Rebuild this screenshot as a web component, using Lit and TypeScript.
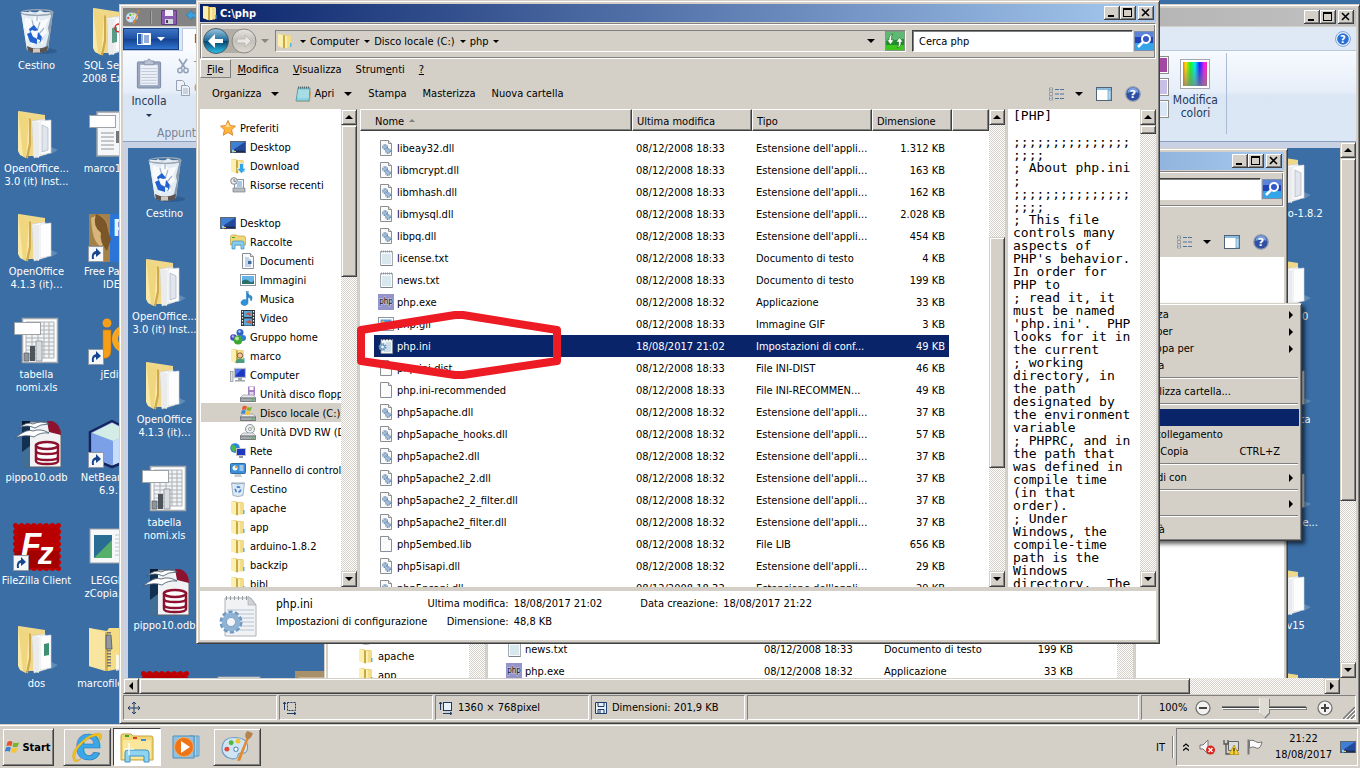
import { LitElement, html, css, svg, nothing } from 'lit'
import { customElement, property } from 'lit/decorators.js'
import { classMap } from 'lit/directives/class-map.js'
import { styleMap } from 'lit/directives/style-map.js'

/* ---------- icon fragments ---------- */

const page16 = svg`
  <path d="M2.500.5h8l3 3v12h-11z" fill="#fbfbfb" stroke="#8a8f94" />
  <path d="M10.500.5v3h3" fill="#e3e6e9" stroke="#8a8f94" />
`

const folder16 = svg`
  <path d="M1 1h5l1 1h6v12.500H5L1 13z" fill="#ecd079" />
  <path d="M1 1l5 1v13l-5-2z" fill="#fbf0b0" />
  <path d="M6 2l2 1v12.500l-2-.5z" fill="#cda743" />
  <path d="M8 3h2.500v12H8z" fill="#fbefb0" />
  <path d="M10.500 2.500H14V14h-3.500z" fill="#f3dc86" />
  <rect x="13" y="10" width="1.500" height="4" fill="#53b6e8" />
`

const monitor16 = svg`
  <rect x=".5" y="2.500" width="15" height="11" fill="#23499b" stroke="#5f666e" />
  <path d="M1 3h14L1 12z" fill="#3f7fd6" />
  <path d="M1 11.500h14v2H1z" fill="#1a2c52" />
  <circle cx="3" cy="12" r="1.500" fill="#8fd0f5" />
  <path d="M4 12h2v1h-2z" fill="#f3c945" />
`

const drive16 = svg`
  <path d="M3 9h10l3 3H0z" fill="#e6e8ea" stroke="#858b90" stroke-width=".6" />
  <path d="M.4 12h15.200v3.500H.4z" fill="#a4a9ad" stroke="#60666b" stroke-width=".8" />
  <rect x="11.500" y="13" width="2.500" height="1.500" fill="#35d03a" />
`

const bin = svg`
  <ellipse cx="30" cy="43" rx="14" ry="3" fill="#1f3f66" opacity=".35" />
  <path d="M8 4h32l-5 38q-11 6-21 0z" fill="#c3d0dc" />
  <path d="M8 4l6 38q4 2 8 3L14 4z" fill="#e9f0f6" />
  <path d="M35 4l-3 38 3-1 5-37z" fill="#8a9bac" />
  <path d="M11 7l6-4 5 3 5-4 5 3 5-1 1 4-3 12 1 5-3 13-8 3H17l-3-9 1-8-3-7z" fill="#e3ecf4" />
  <path d="M12 9l7 3 4-5 5 6 8-3-4 9 2 6-5 4 1 7-6-3-5 5-3-7-4-1 2-6-3-5z" fill="#fff" opacity=".75" />
  <path d="M19 12l2 8M27 14l-3 9M31 20l-5 6M18 28l6 3M30 30l-4 5M24 8v5" stroke="#a3b5c7" stroke-width="1.200" fill="none" />
  <path d="M14 38q10 5 21 0l-.7 5q-10 4-19.500 0z" fill="#5d534e" />
  <path d="M20 40.500h7v4h-7z" fill="#cfc9c4" />
  <path d="M16 21l5-4 4 5-3 1-3-1-2 2zM14 26l4-2 2 5 4 2v5l-7-2zM25 24l4 5-2 6v-3l-3-1z" fill="#1f62d0" />
  <ellipse cx="24" cy="4.500" rx="16" ry="2.800" fill="none" stroke="#9aa6b2" stroke-width="1.300" />
`

const folderOpen = (extra: unknown = nothing) => svg`
  <path d="M6 0l26 4v8l-8 33H12z" fill="#efd88a" />
  <path d="M19 10l13-2 2 35-13 4z" fill="#fff" stroke="#c9ccd0" stroke-width=".6" />
  <path d="M27 10l11-1v33l-11 2z" fill="#fdfdfe" stroke="#d4d7da" stroke-width=".6" />
  <path d="M20 10l6 1v36l-6-2z" fill="#e9ebed" />
  ${extra}
  <path d="M5 0l11 7v25l-3 15-6-3-2-4z" fill="#f8e9a8" />
  <path d="M5 0l11 7-3 40-3-2z" fill="#f0d67f" />
  <path d="M16 7v25l-3 15 2 .500 3-14V8z" fill="#cfa94a" />
  <path d="M38 36l7 3-7 4z" fill="#fff" opacity=".2" />
`

const shortcut = svg`
  <rect x=".5" y="32.500" width="15" height="15" fill="#f4f6f8" stroke="#8f9aa6" />
  <path d="M4 45q-1-7 4-8V34l5 5-5 4V40q-3 0-2 5z" fill="#16458f" />
`

const palette = svg`
  <path d="M2 15q1-9 11-9 13 0 13 9 0 6-5 6-3-1-4 1 0 5-6 4-10-2-9-11z" fill="#cfe5f4" stroke="#6f9cc0" />
  <circle cx="6.500" cy="17" r="2.300" fill="#e2483c" /><circle cx="10.500" cy="11" r="2.300" fill="#52b63c" />
  <circle cx="17" cy="9.500" r="2.300" fill="#f3c330" /><circle cx="15" cy="17" r="2" fill="#fff" stroke="#5d8fb8" />
  <path d="M16 28l9-22 2 1-8 21z" fill="#e58a2b" />
  <path d="M24 6q-1-4 2-6l5 2q-1 4-4 6z" fill="#b5834f" />
`

const icons: Record<string, [string, unknown]> = {
  star: ['0 0 16 16', svg`<path d="M8 .5l2.300 5 5.200.6-3.900 3.700 1.200 5.500L8 12.500l-4.800 2.800 1.200-5.500L.5 6.100l5.200-.6z" fill="#ffb53a" stroke="#d9782a" stroke-width=".8" /><path d="M8 2.500l1.500 4 3.500.5H5z" fill="#ffe18e" />`],
  desktop: ['0 0 16 16', monitor16],
  folder: ['0 0 16 16', folder16],
  download: ['0 0 16 16', svg`${folder16}<path d="M9.500 5.500h4v5H16l-4.500 5-4.500-5h2.500z" fill="#2fa4e6" stroke="#fff" stroke-width=".6" />`],
  recent: ['0 0 16 16', svg`<rect x="4.500" y="2.500" width="9" height="10" fill="#f2f5f8" stroke="#8d969e" /><path d="M8 5h4M7 7h5M7 9h5" stroke="#5f9cd0" /><path d="M3 11h12v4H3z" fill="#b6bcc2" stroke="#7b8389" stroke-width=".7" /><circle cx="4" cy="4" r="3.300" fill="#e9edf0" stroke="#7e888f" /><path d="M4 2v2.300h2" stroke="#555" stroke-width=".8" fill="none" />`],
  library: ['0 0 16 16', svg`<path d="M.5 3q0-2 2-2h4l1 1h6q2 0 2 2v7H.5z" fill="#f2d777" stroke="#c79f3a" stroke-width=".7" /><path d="M2 3h3v1H2z" fill="#3aa93a" /><path d="M2 15V9q0-2 2-2h8q2 0 2 2v6h-3v-4H5v4z" fill="#86cdee" stroke="#3e8fbf" stroke-width=".7" />`],
  doc: ['0 0 16 16', svg`${page16}<path d="M5 5h4M5 7h6M5 9h3M5 11h6M5 13h6" stroke="#6aa0cf" stroke-width=".8" /><rect x="8" y="8" width="3.500" height="3" fill="#3c6c9e" />`],
  image: ['0 0 16 16', svg`<rect x=".5" y="2.500" width="15" height="11" fill="#fff" stroke="#8d969e" /><path d="M2 4h12v8H2z" fill="#64b4e8" /><path d="M2 9q4-3 7 0t5-1v4H2z" fill="#2a6f6a" />`],
  music: ['0 0 16 16', svg`<path d="M8 0v11.500a3.500 3 0 1 1-1.500-2.400V0q1 4 5 5 1.500 2-.5 5-0-3-3-4z" fill="#2f93da" stroke="#1a6cb3" stroke-width=".5" />`],
  video: ['0 0 16 16', svg`<path d="M1 0h14v16H1z" fill="#30363b" /><path d="M4 1h8v6H4zM4 8.500h8v7H4z" fill="#5ba7dc" /><path d="M5 4l5-2 1 4zM5 12l5-2 2 4z" fill="#c7553c" /><path d="M2.500 1v14M13.500 1v14" stroke="#fff" stroke-width="1.200" stroke-dasharray="1.500 1.500" />`],
  homegroup: ['0 0 16 16', svg`<circle cx="10" cy="3.500" r="3.500" fill="#2f62c9" /><circle cx="3.500" cy="8.500" r="3.300" fill="#4b49c4" /><circle cx="13" cy="9" r="3" fill="#2b7ed1" /><circle cx="8" cy="11" r="4.500" fill="#3fa535" /><circle cx="7" cy="9.500" r="2" fill="#b7e69c" /><circle cx="9.500" cy="2.500" r="1.200" fill="#a9d3f7" /><circle cx="3" cy="7.500" r="1.200" fill="#b5b4f1" />`],
  user: ['0 0 16 16', svg`${folder16}<circle cx="10" cy="7.500" r="2.700" fill="#eec39a" stroke="#6b4a2c" stroke-width=".8" /><path d="M5.500 15q0-4.500 4.500-4.500t4.500 4.500z" fill="#4c9d7b" />`],
  computer: ['0 0 16 16', svg`<rect x="4.500" y="1.500" width="11" height="9" fill="#1c38c2" stroke="#b9bec3" stroke-width="1.300" /><path d="M5 2h7L5 9z" fill="#4f74ee" /><path d="M8 11h4v2H8zM5 13h10v1.500H5z" fill="#9fa6ac" /><rect x=".5" y="4.500" width="2.500" height="10" fill="#dfe2e5" stroke="#868d93" stroke-width=".7" />`],
  floppy: ['0 0 16 16', svg`<path d="M8 .5h7v9H8z" fill="#a57fc4" /><path d="M9.500 1h4v3h-4z" fill="#fff" /><path d="M9.500 6h4v3h-4z" fill="#e4d6ee" />${drive16}`],
  hdd: ['0 0 16 16', svg`${drive16}<path d="M2.500 1.500q2-1.500 4.500 0L6 5Q4 4 2 5z" fill="#e65a2c" /><path d="M7.500 1.800q2 1.200 4.500 0l-1 3.500q-2 1-4.300 0z" fill="#7ab82f" /><path d="M1.800 5.500q2-1 4 0l-1 3.500q-2-1-4 0z" fill="#3d86d6" /><path d="M6.500 6q2 1 4.200 0l-1 3.500q-2 1-4.200 0z" fill="#f6c431" />`],
  dvd: ['0 0 16 16', svg`<circle cx="10" cy="5" r="4.500" fill="#eef0f2" stroke="#8d9399" /><circle cx="10" cy="5" r="1.500" fill="#fff" stroke="#9aa1a7" /><path d="M10 5l3-3.500L14 4z" fill="#b6d6a8" />${drive16}`],
  network: ['0 0 16 16', svg`<circle cx="5" cy="5" r="4.800" fill="#2d84dc" /><path d="M2 2q3 0 4 2t-2 5q-3-2-3-5z" fill="#4bb944" /><rect x="6.500" y="5.500" width="9" height="7" fill="#1c38c2" stroke="#c0c5ca" /><path d="M9 13h4v2H9z" fill="#9097a0" />`],
  panel: ['0 0 16 16', svg`<rect x=".5" y="1.500" width="15" height="10" rx="1" fill="#3b8fd8" stroke="#2c6da8" /><circle cx="5" cy="6" r="2.500" fill="#f2f7fb" /><path d="M5 6V3.500A2.500 2.500 0 0 1 7.500 6z" fill="#f39a2e" /><path d="M9.500 4h4M9.500 6h4M9.500 8h4" stroke="#fff" /><path d="M5 12h6l1 3H4z" fill="#c8cdd2" />`],
  binSmall: ['0 0 16 16', svg`<path d="M1.500 2h13l-1.500 12.500q-5 2-10 0z" fill="#dde9f3" stroke="#8fa3b6" stroke-width=".8" /><path d="M2 2q6 2 12 0" fill="none" stroke="#8fa3b6" stroke-width=".8" /><circle cx="8" cy="8.500" r="2.600" fill="none" stroke="#3b80cf" stroke-width="1.600" stroke-dasharray="3.500 1.800" />`],
  bin: ['0 0 48 48', bin],
  dll: ['0 0 16 16', svg`${page16}<circle cx="7" cy="7" r="2.200" fill="#e4eef8" stroke="#2f6299" stroke-width="1.300" stroke-dasharray="1 .6" /><circle cx="10" cy="11" r="2.200" fill="#e4eef8" stroke="#2f6299" stroke-width="1.300" stroke-dasharray="1 .6" /><circle cx="7" cy="7" r=".7" fill="#2f6299" /><circle cx="10" cy="11" r=".7" fill="#2f6299" />`],
  txt: ['0 0 16 16', svg`<path d="M2.500 1.500h12v14h-12z" fill="#f6fafc" stroke="#a4aaaf" /><path d="M3 15.500h11.500" stroke="#7d8388" /><path d="M4 5h9M4 7h9M4 9h9M4 11h9M4 13h9" stroke="#a9cbd8" stroke-width=".8" /><path d="M3 1.500h11" stroke="#8d9398" stroke-width="2" stroke-dasharray="1 1" />`],
  blank: ['0 0 16 16', page16],
  gif: ['0 0 16 16', svg`<rect x=".5" y="1.500" width="15" height="13" fill="#fff" stroke="#8d969e" /><path d="M2.500 3.500h11v9h-11z" fill="#4d9be0" /><path d="M2.500 9h11v3.500h-11z" fill="#3d7f53" /><circle cx="5" cy="6" r="1.500" fill="#f6a53a" />`],
  php: ['0 0 16 16', svg`<path d="M0 0h16v16H0z" fill="#9494cb" /><text x="8" y="10" text-anchor="middle" font-size="8" font-family="DejaVu Sans Condensed, sans-serif" fill="#000" stroke="#d6d6ee" stroke-width="1" paint-order="stroke">php</text>`],
  ini: ['0 0 16 16', svg`<path d="M3 1.500h11.500v14H3z" fill="#f0f5f8" stroke="#888f94" stroke-width=".8" /><path d="M8 5h5M8 7h5M8 9h5M8 11h5M6 13h7" stroke="#93b6c8" stroke-width=".8" /><path d="M4 1.500h10" stroke="#26303b" stroke-width="1.500" stroke-dasharray="1 2" /><circle cx="4.500" cy="9" r="3" fill="#dbe9f4" stroke="#5e8fb8" stroke-width="2" stroke-dasharray="1.500 .8" /><circle cx="4.500" cy="9" r="2" fill="#e9f2f8" stroke="#5e8fb8" />`],
  iniBig: ['0 0 40 44', svg`<path d="M7 4h26l5 7v31H7z" fill="#f1f2f4" stroke="#aeb3b8" /><path d="M30 2v9h8z" fill="#d1d4d7" stroke="#9da2a7" stroke-width=".6" /><path d="M9 16h27M9 20h27M9 24h27M9 28h27M9 32h27M9 36h27" stroke="#b5c3d3" /><path d="M8 4h22" stroke="#94999e" stroke-width="4" stroke-dasharray="1 3" /><circle cx="13" cy="28" r="9.500" fill="none" stroke="#6f9ac2" stroke-width="4" stroke-dasharray="4 2" /><circle cx="13" cy="28" r="7" fill="#f4f7fa" stroke="#8fb3d5" stroke-width="4.500" /><circle cx="13" cy="28" r="4.500" fill="none" stroke="#5f88ae" stroke-width=".7" />`],
  notepad: ['0 0 16 16', svg`<path d="M3 2h12l-1 13H1z" fill="#8cd2de" stroke="#4b8fa0" stroke-width=".8" /><path d="M3 5h11M3 7h11M2.500 9H14M2.500 11H14" stroke="#c9eef3" stroke-width=".8" /><path d="M3 1.500h12" stroke="#54666b" stroke-width="2" stroke-dasharray="1 1" /><path d="M14 15l1.500-11 .5 1-1 10.500H2v-.6z" fill="#c19a55" />`],
  view: ['0 0 16 14', svg`<path d="M.5 1v3h3V1zM.5 5.500v3h3v-3zM.5 10v3h3v-3z" fill="#fff" stroke="#7d868e" stroke-width=".8" /><path d="M1.500 2h1v1h-1z" fill="#2e9c3e" /><path d="M1.500 6.500h1v1h-1z" fill="#d03a2e" /><path d="M1.500 11h1v1h-1z" fill="#3b78c9" /><path d="M6 2.500h4m1 0h4M6 7h4m1 0h4M6 11.500h4m1 0h4" stroke="#4f7399" />`],
  pane: ['0 0 16 14', svg`<rect x=".5" y=".5" width="15" height="13" fill="#fff" stroke="#4f6478" /><path d="M1 1h14v2H1z" fill="#8cbce0" /><path d="M12 3h3v10h-3z" fill="#b5d9ee" stroke="#5c8cb0" stroke-width=".6" />`],
  help: ['0 0 16 16', svg`<circle cx="8" cy="8" r="7.200" fill="#2e4fa3" stroke="#8c97ad" stroke-width="1.300" /><path d="M2.500 7a5.500 5.500 0 0 1 11 0q-5-3-11 0z" fill="#7d9fe0" /><text x="8" y="12" text-anchor="middle" font-size="11" font-weight="bold" font-family="DejaVu Sans, sans-serif" fill="#fff">?</text>`],
  helpBlue: ['0 0 16 16', svg`<circle cx="8" cy="8" r="7.400" fill="#eef5fc" stroke="#7ba0d6" /><circle cx="8" cy="8" r="5.800" fill="#2a6fd6" /><text x="8" y="12" text-anchor="middle" font-size="10" font-weight="bold" font-family="DejaVu Sans, sans-serif" fill="#fff">?</text>`],
  refresh: ['0 0 20 20', svg`<rect x=".5" y=".5" width="19" height="19" fill="#1f8f2c" stroke="#7e9a80" /><path d="M1 1h18v7L1 10z" fill="#5fb873" /><path d="M1 14h18v5H1z" fill="#3cc61e" /><path d="M8 3Q6 4 6.500 9H9l-3.500 4.500L2 9h2q-.5-5 4-6zM12 17q2-1 1.500-6H11l3.500-4.500L18 11h-2q.5 5-4 6z" fill="#fff" stroke="#1c6b22" stroke-width=".6" />`],
  search: ['0 0 20 20', svg`<rect x=".5" y=".5" width="19" height="19" fill="#2143b8" stroke="#7e8fae" /><path d="M1 1h18v5H1z" fill="#5d83d8" /><path d="M1 12h18v7H1z" fill="#35a5ea" /><circle cx="12" cy="8" r="4" fill="#3157c9" stroke="#fff" stroke-width="2" /><path d="M9 11l-5 5" stroke="#fff" stroke-width="2.500" />`],
  backForward: ['0 0 56 28', svg`
    <defs>
      <linearGradient id="bk" x2="0" y2="1"><stop offset="0" stop-color="#9cc9e0" /><stop offset=".48" stop-color="#1b6a9c" /><stop offset=".5" stop-color="#063f6a" /><stop offset="1" stop-color="#2cc6ee" /></linearGradient>
      <linearGradient id="fw" x2="0" y2="1"><stop offset="0" stop-color="#e6e4e0" /><stop offset=".5" stop-color="#c3c0ba" /><stop offset="1" stop-color="#dedbd5" /></linearGradient>
    </defs>
    <path d="M14 2h28a12 12 0 0 1 0 24H14z" fill="#b2aea7" />
    <circle cx="14" cy="14" r="12.500" fill="url(#bk)" stroke="#4b5a66" />
    <path d="M13 7l-7 7 7 7v-5h8v-4h-8z" fill="#fff" />
    <circle cx="42" cy="14" r="12" fill="url(#fw)" stroke="#8b8882" />
    <path d="M43 8l6 6-6 6v-4h-8v-4h8z" fill="#e9e7e3" stroke="#b1aea8" stroke-width=".7" />
  `],
  folderOpen: ['0 0 48 48', folderOpen()],
  folderApp: ['0 0 48 48', folderOpen(svg`<path d="M29 14l6 3v22l-6 2z" fill="#e1e6ee" stroke="#a9b2c0" stroke-width=".7" />`)],
  folderDos: ['0 0 48 48', folderOpen(svg`<path d="M31 18l5-1v12l-5 1z" fill="#3f8f72" />`)],
  folderSql: ['0 0 48 48', folderOpen(svg`<path d="M24 20l5-1v15l-5 1z" fill="#5a9a86" /><circle cx="31" cy="20" r="4" fill="none" stroke="#d22" stroke-width="1.500" />`)],
  xls: ['0 0 48 48', svg`
    <rect x="9.500" y="1.500" width="35" height="44" fill="#fff" stroke="#a3a7ab" stroke-width="1.500" />
    <path d="M13 5h28v36H13z" fill="#f3f4f5" />
    <path d="M13 9h28M13 13h28M13 17h28M13 21h28M13 25h28M13 29h28M13 33h28M13 37h28M13 41h28M13 5v36M19 5v36M25 5v36M31 5v36M36 5v36M41 5v36M13 5h28" stroke="#adb1b6" stroke-width="1" />
    <path d="M11 36h5v8h-5z" fill="#8d949c" stroke="#5f666d" stroke-width=".8" /><path d="M17 29h5v15h-5z" fill="#4c545c" /><path d="M23 24h6v20h-6z" fill="#dadde0" stroke="#8b9198" stroke-width=".8" />
    <rect x="1.500" y="5.500" width="26" height="12" fill="#fff" stroke="#9da2a7" />
  `],
  odb: ['0 0 48 48', svg`
    <path d="M10 2h28q10 2 10 14v31H10z" fill="#f1f2f4" stroke="#5d646b" />
    <path d="M9 1h8v46H9z" fill="#12304f" /><path d="M9 1h8v4H9z" fill="#0a1a2e" /><path d="M9 32l8-6v21H9z" fill="#3f6f97" />
    <path d="M34 1h5q9 3 9 14l-12-3z" fill="#8c1230" />
    <path d="M2 18q12-10 18-7 8-3 16 2-9-1-15 4-8-3-19 1zM6 8q8-7 14-4 8-4 16 0-9 0-14 4-8-4-16 0z" fill="#fff" stroke="#40566b" stroke-width=".8" />
    <g fill="#fff" stroke="#8c1230" stroke-width="2.500"><path d="M23 26v15q0 3 11 3t11-3V26z" /><path d="M23 31q0 3 11 3t11-3M23 37q0 3 11 3t11-3" fill="none" /><ellipse cx="34" cy="25.500" rx="11" ry="3.500" /></g>
  `],
  filezilla: ['0 0 48 48', svg`
    <rect x="3" y="3" width="42" height="42" fill="#b80000" stroke="#b80000" stroke-width="3" />
    <rect x="2.500" y="2.500" width="43" height="43" fill="none" stroke="#c00000" stroke-width="5" stroke-dasharray="0.010 6.130" stroke-linecap="round" />
    <path d="M2 28h44v17H2z" fill="#8d0000" opacity=".5" />
    <text x="8" y="33" font-size="33" font-weight="bold" font-style="italic" font-family="Liberation Sans, sans-serif" fill="#fff">F</text>
    <text x="25" y="41" font-size="31" font-weight="bold" font-style="italic" font-family="Liberation Sans, sans-serif" fill="#fff">z</text>
    ${shortcut}
  `],
  docLines: ['0 0 48 48', svg`<path d="M9 1h36v44H9z" fill="#f6f7f8" stroke="#9da2a7" stroke-width="1.500" /><path d="M13 22h13M13 26h13M13 30h13M13 34h13M13 38h13" stroke="#8f959b" stroke-width="1.200" /><path d="M28 20h12v12H28z" fill="#777" /><rect x="1.500" y="4.500" width="26" height="12" fill="#fff" stroke="#9da2a7" />`],
  pascal: ['0 0 48 48', svg`<path d="M1 0h47v48H1z" fill="#2b74d8" /><path d="M1 0h21v48H1z" fill="#a5814a" /><path d="M3 4q10-6 14 2 6 7 0 13 4 10-5 13-8-5-9-28z" fill="#d8b57a" /><path d="M8 0q12 4 12 17l3 8-4 12q-8-10-6-18Q4 12 8 0z" fill="#7a5628" /><text x="25" y="22" font-size="24" font-weight="bold" font-family="Liberation Sans, sans-serif" fill="#eaf3ff">F</text>${shortcut}`],
  jedit: ['0 0 48 48', svg`<circle cx="19" cy="6" r="4.500" fill="#f59e17" /><path d="M15 13h8v20q0 10-9 8 2-4 1-8z" fill="#f59e17" stroke="#c9740a" stroke-width=".6" /><circle cx="38" cy="22" r="11" fill="none" stroke="#f8a51f" stroke-width="6" />${shortcut}`],
  netbeans: ['0 0 48 48', svg`<path d="M2 12L24 1l22 11v26L24 47 2 38z" fill="#8fb4ee" stroke="#18235c" stroke-width="2.500" stroke-linejoin="round" /><path d="M4 13L24 3l20 10-19 8z" fill="#d4ece6" /><path d="M4 13l21 8v24L4 37z" fill="#7ba0e8" /><path d="M25 21l19-8v24l-19 8z" fill="#c8dcf9" />${shortcut}`],
  appPage: ['0 0 48 48', svg`<rect x="2" y="6" width="42" height="34" fill="#f6f7f8" stroke="#9da2a7" /><rect x="6" y="12" width="18" height="23" fill="#2a6d94" /><path d="M6 35l18-18v18z" fill="#56b06a" /><path d="M27 12h14M27 16h14M27 20h14M27 24h14M27 28h14M27 32h14" stroke="#c2c7cb" />`],
  zip: ['0 0 48 48', svg`<path d="M1 2l18 3 2-3h10l4 6v34l-15 3-19-5z" fill="#f5dd86" /><path d="M1 2l16 4v39L1 40z" fill="#f8e6a0" /><path d="M17 6h3v39h-3z" fill="#d5b04b" /><path d="M21 6v36" stroke="#777" stroke-width="4" stroke-dasharray="1.500 1.500" /><path d="M18 9h5l1 14h-6z" fill="#9299a0" stroke="#4f565c" stroke-width=".8" /><path d="M28 28l7 3v12l-7 2z" fill="#fff" opacity=".8" />`],
  beige: ['0 0 48 48', svg`<path d="M4 0h40v44H4z" fill="#a8916a" /><path d="M8 6h32v10H8z" fill="#c7b48e" />`],
  winflag: ['0 0 16 16', svg`<path d="M2.500 3q2.500-1.800 5 0L6.300 7.300q-2.400-1.600-5 0z" fill="#e4522a" /><path d="M8.500 3.400q2.500 1.500 5.500-.2l-1.200 4.400q-2.800 1.500-5.400 0z" fill="#76b52d" /><path d="M1 8.400q2.500-1.500 4.900 0l-1.200 4.400q-2.500-1.600-5 0z" fill="#3b82d4" /><path d="M7 8.800q2.600 1.500 5.400 0l-1.200 4.300q-2.700 1.600-5.400 0z" fill="#f8c52f" />`],
  ie: ['0 0 32 32', svg`<text x="17" y="29" text-anchor="middle" font-size="48" font-weight="bold" font-family="Liberation Sans, sans-serif" fill="#3aa8e8" stroke="#1c73b8" stroke-width=".6">e</text><path d="M3 30Q-2 22 10 11T30 3q2 3-2 8 1-5-1-6-6-1-15 7T4 28q1 2 6 0-4 4-7 2z" fill="#f4c21f" stroke="#c99512" stroke-width=".4" />`],
  explorer: ['0 0 34 32', svg`<path d="M1 5q0-2 2-2h8l2 2h18q2 0 2 2v22H1z" fill="#f3d774" stroke="#c9a23e" /><path d="M3 9h28v19H3z" fill="#f9e79d" /><path d="M5 4h4v2H5z" fill="#37a737" /><path d="M13 6h4v2h-4z" fill="#d9402e" /><path d="M21 8h5v2h-5z" fill="#3b8fd8" /><path d="M5 31V22q0-3 3-3h18q3 0 3 3v9h-5v-6H10v6z" fill="#8fd3f0" stroke="#3f93c4" /><path d="M9 12v12M4 18h10" stroke="#fff" stroke-width="1.200" />`],
  wmp: ['0 0 30 28', svg`<path d="M17 3h10v20H17z" fill="#a8d2ea" stroke="#5e9fc7" /><path d="M22 3v22M25 3v21" stroke="#5e9fc7" /><path d="M1 3h21v22H1z" fill="#8cc3e4" stroke="#4d8fba" /><circle cx="12" cy="14" r="9.500" fill="#ef7418" stroke="#f8a95e" /><path d="M9 8l9 6-9 6z" fill="#fff" />`],
  palette: ['0 0 32 30', palette],
  save: ['0 0 16 16', svg`<path d="M.5 1.500h15v14H.5z" fill="#8b5bb0" stroke="#5f3b82" /><path d="M4 1h8v6H4z" fill="#f3eef8" /><path d="M4 10h8v5H4z" fill="#cfd3da" /><path d="M5 11h2v3H5z" fill="#4b3a63" />`],
  undo: ['0 0 16 16', svg`<path d="M1 6l6-5v3q8 0 8 6 0 3-3 5 2-7-5-7v3z" fill="#3da0dc" stroke="#2478ae" stroke-width=".6" />`],
  paste: ['0 0 28 32', svg`<rect x="2" y="4" width="24" height="27" rx="1" fill="#98a5bc" stroke="#7b89a3" /><path d="M5 7h18v21H5z" fill="#eef2f8" /><path d="M6 11h16M6 14h16M6 17h16M6 20h16M6 23h16M6 26h16" stroke="#bcc6d8" /><path d="M9 3h3q2-4 4 0h3v4H9z" fill="#b8c2d2" stroke="#7b89a3" stroke-width=".8" />`],
  cut: ['0 0 16 16', svg`<path d="M4 1l6 9M12 1L6 10" stroke="#94a2b8" stroke-width="1.800" /><circle cx="5" cy="12.500" r="2.200" fill="none" stroke="#94a2b8" stroke-width="1.500" /><circle cx="11" cy="12.500" r="2.200" fill="none" stroke="#94a2b8" stroke-width="1.500" />`],
  copy: ['0 0 16 16', svg`<path d="M1.500.5h6l2 2v8h-8z" fill="#eef2f8" stroke="#94a2b8" /><path d="M6.500 5.500h6l2 2v8h-8z" fill="#eef2f8" stroke="#94a2b8" /><path d="M8 9h5M8 11h5M8 13h5" stroke="#a5b1c4" />`],
  fileTab: ['0 0 14 12', svg`<path d="M.5.5h13v11H.5z" fill="#2c5fb0" stroke="#fff" /><path d="M5 1v10" stroke="#fff" /><path d="M6 1h7v10H6z" fill="#fff" /><path d="M7 3h5M7 5h5M7 7h5M7 9h5" stroke="#2c5fb0" />`],
  move: ['0 0 14 14', svg`<path d="M7 1v12M1 7h12M5 3l2-2 2 2M5 11l2 2 2-2M3 5L1 7l2 2M11 5l2 2-2 2" fill="none" stroke="#1d3b66" />`],
  selection: ['0 0 14 14', svg`<path d="M1.500 1v8M0 3l1.500-2L3 3M4 12.500h9M11 11l2 1.500-2 1.500" fill="none" stroke="#1d3b66" /><rect x="4.500" y="1.500" width="8" height="8" fill="none" stroke="#1d3b66" stroke-dasharray="2 1" />`],
  imageSize: ['0 0 14 14', svg`<path d="M1.500 1v8M0 3l1.500-2L3 3M4 12.500h9M11 11l2 1.500-2 1.500" fill="none" stroke="#1d3b66" /><rect x="4.500" y="1.500" width="8" height="8" fill="#e8f0fa" stroke="#1d3b66" />`],
  disk: ['0 0 12 12', svg`<path d="M.5.5h11v11H.5z" fill="#e8f0fa" stroke="#1d3b66" /><path d="M3 .5v4h6v-4M3 11.500v-4h6v4M5 8v3" fill="none" stroke="#1d3b66" />`],
  minus: ['0 0 16 16', svg`<circle cx="8" cy="8" r="7" fill="#f3f2f0" stroke="#6d6d6d" stroke-width="1.200" /><path d="M4 8h8" stroke="#444" stroke-width="2" />`],
  plus: ['0 0 16 16', svg`<circle cx="8" cy="8" r="7" fill="#f3f2f0" stroke="#6d6d6d" stroke-width="1.200" /><path d="M4 8h8M8 4v8" stroke="#444" stroke-width="2" />`],
  grip: ['0 0 12 12', svg`<path d="M0 12L12 0M4 12l8-8M8 12l4-4" stroke="#777" stroke-width="1.500" /><path d="M2 12L12 2M6 12l6-6M10 12l2-2" stroke="#fff" />`],
  volume: ['0 0 16 16', svg`<path d="M1 6h3l5-5v14L4 10H1z" fill="#f4f4f4" stroke="#777" /><circle cx="11.500" cy="11" r="4.500" fill="#d8261c" /><path d="M9.500 9l4 4M13.500 9l-4 4" stroke="#fff" stroke-width="1.400" />`],
  netWarn: ['0 0 16 16', svg`<path d="M5.500 2.500h10v9h-10z" fill="#d9dcdf" stroke="#666" /><path d="M1 1v4h4V1M3 5v10h5" fill="none" stroke="#555" stroke-width="1.300" /><path d="M11 6l5 9.500H6z" fill="#f8d12e" stroke="#a98410" stroke-width=".7" /><path d="M11 9v3.500M11 13.500v1" stroke="#222" stroke-width="1.200" />`],
  flag: ['0 0 16 16', svg`<path d="M1.500.5v15" stroke="#777" stroke-width="2" /><path d="M2.500 1.500q4-1 6 1t6.500.500q-1 5-3 6t-4-.500-5.500.500z" fill="#fbfbfb" stroke="#777" />`],
}

const icon = (name: string, cls = 'i16') =>
  html`<svg class="icon ${cls}" viewBox=${icons[name][0]} aria-hidden="true">${icons[name][1]}</svg>`

/* ---------- shared styles ---------- */

const base = css`
  * {
    box-sizing: border-box;
  }
  :host {
    font: 11px/13px 'DejaVu Sans Condensed', Roboto, sans-serif;
    color: #000;
    white-space: nowrap;
    cursor: default;
  }
  button {
    font: inherit;
    color: inherit;
    margin: 0;
    padding: 0;
    border: 0;
    background: none;
    display: inline-flex;
    align-items: center;
  }
  .icon {
    display: block;
    flex: none;
  }
  .i16 {
    width: 16px;
    height: 16px;
  }
  .frame,
  .raised {
    background: #d4d0c8;
    border: 1px solid;
    border-color: #d4d0c8 #404040 #404040 #d4d0c8;
    box-shadow:
      inset 1px 1px #fff,
      inset -1px -1px #808080;
  }
  .down {
    display: block;
    flex: none;
    border: 4px solid transparent;
    border-top-color: currentColor;
    border-bottom: 0;
  }
  .down.small {
    border-width: 3px;
    border-bottom: 0;
  }
  .titlebar {
    display: flex;
    align-items: center;
    flex: none;
    height: 18px;
    padding: 0 2px;
  }
  .caption {
    display: flex;
    margin-left: auto;
  }
  .caption button {
    width: 16px;
    height: 14px;
    justify-content: center;
    background: #d4d0c8;
    box-shadow:
      inset -1px -1px #404040,
      inset 1px 1px #fff,
      inset -2px -2px #808080;
  }
  .caption button:last-child {
    margin-left: 2px;
  }
  .caption svg {
    width: 12px;
    height: 10px;
  }
`

const caption = html`
  <div class="caption">
    <button aria-label="Riduci a icona"><svg viewBox="0 0 12 10"><path d="M2 7h6v2H2z" /></svg></button>
    <button aria-label="Ingrandisci">
      <svg viewBox="0 0 12 10"><path d="M1 0h9v9H1zM2 2v6h7V2z" fill-rule="evenodd" /></svg>
    </button>
    <button aria-label="Chiudi">
      <svg viewBox="0 0 12 10"><path d="M2 1l7 7M9 1L2 8" stroke="#000" stroke-width="1.600" /></svg>
    </button>
  </div>
`

/* ---------- scroll bar ---------- */

/** Classic scroll bar. `start` and `size` are percentages of the track. */
@customElement('scroll-bar')
export class ScrollBar extends LitElement {
  @property({ type: Boolean, reflect: true }) horizontal = false
  @property({ type: Number }) start = 0
  @property({ type: Number }) size = 50

  static styles = [
    base,
    css`
      :host {
        display: flex;
        flex-direction: column;
        flex: none;
        width: 16px;
        background: repeating-conic-gradient(#fff 0 25%, #d4d0c8 0 50%) 0 0 / 2px 2px;
      }
      :host([horizontal]) {
        flex-direction: row;
        width: auto;
        height: 16px;
      }
      button {
        flex: none;
        width: 16px;
        height: 16px;
        justify-content: center;
      }
      .track {
        flex: 1;
        display: flex;
        flex-direction: inherit;
        min-height: 0;
      }
      .thumb {
        flex: none;
      }
      svg {
        width: 8px;
        height: 8px;
      }
    `,
  ]

  render() {
    const side = this.horizontal ? 'width' : 'height'
    const prev = this.horizontal ? 'M2 4l4-4v8z' : 'M0 6l4-4 4 4z'
    const next = this.horizontal ? 'M6 4L2 0v8z' : 'M0 2l4 4 4-4z'
    return html`
      <button class="raised" aria-label="Indietro"><svg viewBox="0 0 8 8"><path d=${prev} /></svg></button>
      <div class="track">
        <div style=${styleMap({ [side]: `${this.start}%` })}></div>
        <div class="thumb raised" style=${styleMap({ [side]: `${this.size}%` })}></div>
      </div>
      <button class="raised" aria-label="Avanti"><svg viewBox="0 0 8 8"><path d=${next} /></svg></button>
    `
  }
}

/* ---------- desktop icons ---------- */

type Shortcut = { icon: string; label: string; col: number; row: number }

const shortcuts: Shortcut[] = [
  { icon: 'bin', label: 'Cestino', col: 1, row: 1 },
  { icon: 'folderApp', label: 'OpenOffice...\n3.0 (it) Inst...', col: 1, row: 2 },
  { icon: 'folderOpen', label: 'OpenOffice\n4.1.3 (it)...', col: 1, row: 3 },
  { icon: 'xls', label: 'tabella\nnomi.xls', col: 1, row: 4 },
  { icon: 'odb', label: 'pippo10.odb', col: 1, row: 5 },
  { icon: 'filezilla', label: 'FileZilla Client', col: 1, row: 6 },
  { icon: 'folderDos', label: 'dos', col: 1, row: 7 },
  { icon: 'folderSql', label: 'SQL Server\n2008 Expr...', col: 2, row: 1 },
  { icon: 'docLines', label: 'marco15.xl', col: 2, row: 2 },
  { icon: 'pascal', label: 'Free Pascal\nIDE', col: 2, row: 3 },
  { icon: 'jedit', label: 'jEdit', col: 2, row: 4 },
  { icon: 'netbeans', label: 'NetBeans ID\n6.9.1', col: 2, row: 5 },
  { icon: 'appPage', label: 'LEGGIMI\nzCopia.exe', col: 2, row: 6 },
  { icon: 'zip', label: 'marcofiles.zip', col: 2, row: 7 },
  { icon: 'beige', label: 'foto', col: 3, row: 6 },
  { icon: 'folderApp', label: 'arduino-1.8.2', col: 16, row: 1 },
  { icon: 'folderOpen', label: 'app 2.0', col: 16, row: 2 },
  { icon: 'folderOpen', label: 'pubblica', col: 16, row: 3 },
  { icon: 'folderOpen', label: 'materiale...', col: 16, row: 4 },
  { icon: 'folderOpen', label: 'dev15', col: 16, row: 5 },
  { icon: 'folderOpen', label: 'java', col: 16, row: 6 },
]

@customElement('desktop-icons')
export class DesktopIcons extends LitElement {
  static styles = [
    base,
    css`
      :host {
        display: grid;
        grid-template-columns: repeat(18, 75px);
        grid-template-rows: repeat(7, 103px);
        color: #fff;
      }
      .item {
        display: flex;
        flex-direction: column;
        align-items: center;
        gap: 3px;
        width: 73px;
        padding-top: 8px;
        text-align: center;
        white-space: pre;
      }
      .i48 {
        width: 48px;
        height: 48px;
        overflow: visible;
      }
    `,
  ]

  render() {
    return shortcuts.map(
      s => html`
        <div class="item" style=${styleMap({ gridColumn: `${s.col}`, gridRow: `${s.row}` })}>
          ${icon(s.icon, 'i48')}<span>${s.label}</span>
        </div>
      `
    )
  }
}

/* ---------- explorer window ---------- */

type TreeNode = [level: number, icon: string, label: string]

const tree: TreeNode[] = [
  [0, 'star', 'Preferiti'],
  [1, 'desktop', 'Desktop'],
  [1, 'download', 'Download'],
  [1, 'recent', 'Risorse recenti'],
  [0, '', ''],
  [0, 'desktop', 'Desktop'],
  [1, 'library', 'Raccolte'],
  [2, 'doc', 'Documenti'],
  [2, 'image', 'Immagini'],
  [2, 'music', 'Musica'],
  [2, 'video', 'Video'],
  [1, 'homegroup', 'Gruppo home'],
  [1, 'user', 'marco'],
  [1, 'computer', 'Computer'],
  [2, 'floppy', 'Unità disco floppy'],
  [2, 'hdd', 'Disco locale (C:)'],
  [2, 'dvd', 'Unità DVD RW (D:)'],
  [1, 'network', 'Rete'],
  [1, 'panel', 'Pannello di controllo'],
  [1, 'binSmall', 'Cestino'],
  [1, 'folder', 'apache'],
  [1, 'folder', 'app'],
  [1, 'folder', 'arduino-1.8.2'],
  [1, 'folder', 'backzip'],
  [1, 'folder', 'bibl'],
]

type FileRow = [icon: string, name: string, date: string, type: string, size: string]

const dll = "Estensione dell'appli..."
const text = 'Documento di testo'

const files: FileRow[] = [
  ['dll', 'libeay32.dll', '08/12/2008 18:33', dll, '1.312 KB'],
  ['dll', 'libmcrypt.dll', '08/12/2008 18:33', dll, '163 KB'],
  ['dll', 'libmhash.dll', '08/12/2008 18:33', dll, '162 KB'],
  ['dll', 'libmysql.dll', '08/12/2008 18:33', dll, '2.028 KB'],
  ['dll', 'libpq.dll', '08/12/2008 18:33', dll, '454 KB'],
  ['txt', 'license.txt', '08/12/2008 18:33', text, '4 KB'],
  ['txt', 'news.txt', '08/12/2008 18:33', text, '199 KB'],
  ['php', 'php.exe', '08/12/2008 18:32', 'Applicazione', '33 KB'],
  ['gif', 'php.gif', '08/12/2008 18:33', 'Immagine GIF', '3 KB'],
  ['ini', 'php.ini', '18/08/2017 21:02', 'Impostazioni di conf...', '49 KB'],
  ['blank', 'php.ini-dist', '08/12/2008 18:33', 'File INI-DIST', '46 KB'],
  ['blank', 'php.ini-recommended', '08/12/2008 18:33', 'File INI-RECOMMEN...', '49 KB'],
  ['dll', 'php5apache.dll', '08/12/2008 18:32', dll, '37 KB'],
  ['dll', 'php5apache_hooks.dll', '08/12/2008 18:32', dll, '57 KB'],
  ['dll', 'php5apache2.dll', '08/12/2008 18:32', dll, '37 KB'],
  ['dll', 'php5apache2_2.dll', '08/12/2008 18:32', dll, '37 KB'],
  ['dll', 'php5apache2_2_filter.dll', '08/12/2008 18:32', dll, '37 KB'],
  ['dll', 'php5apache2_filter.dll', '08/12/2008 18:32', dll, '37 KB'],
  ['blank', 'php5embed.lib', '08/12/2008 18:32', 'File LIB', '656 KB'],
  ['dll', 'php5isapi.dll', '08/12/2008 18:32', dll, '29 KB'],
  ['dll', 'php5nsapi.dll', '08/12/2008 18:32', dll, '29 KB'],
]

const previewText = `[PHP]

;;;;;;;;;;;;;;;
;;;;
; About php.ini
;
;;;;;;;;;;;;;;;
;;;;
; This file
controls many
aspects of
PHP's behavior.
In order for
PHP to
; read it, it
must be named
'php.ini'.  PHP
looks for it in
the current
; working
directory, in
the path
designated by
the environment
variable
; PHPRC, and in
the path that
was defined in
compile time
(in that
order).
; Under
Windows, the
compile-time
path is the
Windows
directory.  The`

/**
 * Explorer window on C:\php.
 *
 * @element explorer-window
 */
@customElement('explorer-window')
export class ExplorerWindow extends LitElement {
  /** Height of the blank or partly scrolled area above the first full row. */
  @property({ type: Number }) lead = 6
  /** Index of the first file listed. */
  @property({ type: Number }) first = 0
  /** Name of the selected file, shown in the preview and details panes. */
  @property({ type: String }) selected = ''

  static styles = [
    base,
    css`
      :host {
        display: block;
      }
      .frame {
        display: flex;
        flex-direction: column;
        height: 100%;
        padding: 3px;
      }
      .titlebar {
        gap: 2px;
        color: #fff;
        font-weight: bold;
        background: linear-gradient(90deg, #0a246a, #a6caf0);
      }
      .address {
        display: flex;
        align-items: center;
        flex: none;
        height: 36px;
        margin-top: 1px;
        padding: 0 1px;
        border: 1px solid;
        border-color: #808080 #fff #fff #808080;
        box-shadow:
          inset 1px 1px #fff,
          inset -1px -1px #808080;
      }
      .nav {
        width: 56px;
        height: 28px;
      }
      .drop {
        color: #8a8680;
        margin: 0 6px 0 3px;
      }
      .crumbs {
        flex: 1;
        display: flex;
        align-items: center;
        height: 22px;
        padding-left: 1px;
        border: 1px solid;
        border-color: #808080 #fff #fff #808080;
      }
      .crumbs .down.small {
        margin: 0 4px 0 5px;
      }
      .crumbs .down.small:first-of-type {
        margin-left: 7px;
      }
      .crumbs .last {
        margin-left: auto;
        margin-right: 10px;
      }
      .i20 {
        width: 20px;
        height: 20px;
      }
      input {
        width: 221px;
        height: 22px;
        margin: 0 1px 0 6px;
        padding: 0 6px;
        font: inherit;
        color: #000;
        background: #fff;
        border: 1px solid;
        border-color: #404040 #fff #fff #404040;
        outline: 1px solid #d4d0c8;
        box-shadow: inset 1px 1px #808080;
        border-radius: 0;
      }
      .menubar,
      .toolbar {
        display: flex;
        align-items: center;
        flex: none;
      }
      .menubar {
        height: 19px;
      }
      .menubar button {
        height: 19px;
        padding: 1px 6px 0;
        border: 1px solid transparent;
      }
      .menubar button.active {
        border-color: #fff #808080 #808080 #fff;
      }
      .toolbar {
        height: 31px;
        padding: 0 15px 0 12px;
        gap: 16px;
      }
      .toolbar button {
        gap: 3px;
      }
      .toolbar .down {
        margin-left: 7px;
      }
      .tools {
        display: flex;
        align-items: center;
        gap: 13px;
        margin-left: auto;
      }
      .small-icon {
        width: 16px;
        height: 14px;
      }
      .body {
        display: flex;
        flex: 1;
        min-height: 0;
      }
      ul {
        list-style: none;
        flex: none;
        width: 141px;
        margin: 0;
        padding: 9px 0 0;
        overflow: hidden;
        background: #fff;
      }
      li {
        display: flex;
        align-items: center;
        gap: 4px;
        height: 19px;
        padding: 1px 0 0 20px;
      }
      li.l1 {
        padding-left: 30px;
      }
      li.l2 {
        padding-left: 40px;
      }
      li.current {
        background: #d4d0c8;
        margin-left: 1px;
        padding-left: 39px;
      }
      .list {
        flex: 1;
        min-width: 0;
        margin-left: 3px;
        overflow: hidden;
        background: #fff;
      }
      table {
        width: 100%;
        table-layout: fixed;
        border-collapse: separate;
        border-spacing: 0;
      }
      th {
        height: 22px;
        padding: 2px 4px 0;
        font-weight: normal;
        text-align: left;
        background: #d4d0c8;
        border: 1px solid;
        border-color: #fff #404040 #404040 #fff;
        box-shadow: inset -1px -1px #808080;
      }
      th:first-child {
        padding-left: 14px;
      }
      th i {
        display: inline-block;
        margin: 0 0 3px 5px;
        border: 3px solid transparent;
        border-top: 0;
        border-bottom-color: #808080;
      }
      .c-name {
        width: 272px;
      }
      .c-mid {
        width: 120px;
      }
      .c-size {
        width: 80px;
      }
      td {
        height: 22px;
        padding: 0 0 0 4px;
        overflow: hidden;
      }
      td:first-child {
        padding-left: 18px;
      }
      td.size {
        padding: 0 7px 0 0;
        text-align: right;
      }
      tr.lead td {
        height: auto;
        padding: 0;
        line-height: 0;
      }
      tr.sel {
        color: #fff;
      }
      tr.sel td {
        background: linear-gradient(#0a246a, #0a246a) no-repeat;
      }
      tr.sel td:first-child {
        background-position: 14px 0;
      }
      tr.sel td.size {
        background-size: calc(100% - 3px) 100%;
      }
      tr.sel td.rest {
        background: none;
      }
      .name {
        display: flex;
        align-items: center;
        gap: 3px;
        height: 22px;
      }
      .preview {
        flex: none;
        display: flex;
        width: 148px;
        margin-left: 3px;
        background: #fff;
        overflow: hidden;
      }
      pre {
        flex: 1;
        margin: 0;
        padding-left: 5px;
        font: 13px/13px 'DejaVu Sans Mono', monospace;
      }
      .details {
        flex: none;
        display: flex;
        align-items: flex-start;
        height: 49px;
        margin-top: 4px;
        padding: 3px 18px;
        background: #fff;
      }
      .big {
        width: 40px;
        height: 44px;
      }
      .details dl {
        display: grid;
        grid-template-columns: max-content max-content;
        column-gap: 5px;
        margin: 1px 0 0;
        line-height: 18px;
      }
      .details dl + dl {
        margin-left: 38px;
      }
      .details dt {
        text-align: right;
      }
      .details dd {
        margin: 0;
      }
      .what {
        margin: 1px 0 0 18px;
        line-height: 18px;
      }
      .what b {
        display: block;
        font-size: 12px;
        font-weight: normal;
      }
    `,
  ]

  private renderRow([ico, name, date, type, size]: FileRow) {
    return html`
      <tr class=${classMap({ sel: name === this.selected })}>
        <td><div class="name">${icon(ico)}${name}</div></td>
        <td>${date}</td>
        <td>${type}</td>
        <td class="size">${size}</td>
        <td class="rest"></td>
      </tr>
    `
  }

  render() {
    return html`
      <div class="frame">
        <div class="titlebar">${icon('folder')}<span>C:\\php</span>${caption}</div>
        <div class="address">
          <button aria-label="Indietro e avanti">${icon('backForward', 'nav')}</button>
          <span class="down drop"></span>
          <div class="crumbs">
            ${icon('folder')}
            <span class="down small"></span><button>Computer</button>
            <span class="down small"></span><button>Disco locale (C:)</button>
            <span class="down small"></span><button>php</button>
            <span class="down small"></span>
            <span class="down last"></span>
            <button aria-label="Aggiorna">${icon('refresh', 'i20')}</button>
          </div>
          <input aria-label="Cerca" type="text" value="Cerca php" />
          <button aria-label="Avvia ricerca">${icon('search', 'i20')}</button>
        </div>
        <div class="menubar">
          <button class="active"><span><u>F</u>ile</span></button>
          <button><span><u>M</u>odifica</span></button>
          <button><span><u>V</u>isualizza</span></button>
          <button><span>Strum<u>e</u>nti</span></button>
          <button><u>?</u></button>
        </div>
        <div class="toolbar">
          <button>Organizza<span class="down"></span></button>
          <button>${icon('notepad')}Apri<span class="down"></span></button>
          <button>Stampa</button>
          <button>Masterizza</button>
          <button>Nuova cartella</button>
          <div class="tools">
            <button aria-label="Visualizzazione">${icon('view', 'small-icon')}<span class="down"></span></button>
            <button aria-label="Riquadro di anteprima">${icon('pane', 'small-icon')}</button>
            <button aria-label="Guida">${icon('help')}</button>
          </div>
        </div>
        <div class="body">
          <ul>
            ${tree.map(
              ([level, ico, label]) => html`
                <li class="l${level} ${ico === 'hdd' ? 'current' : ''}">
                  ${ico ? icon(ico) : nothing}${label}
                </li>
              `
            )}
          </ul>
          <scroll-bar size="34"></scroll-bar>
          <div class="list">
            <table>
              <colgroup>
                <col class="c-name" />
                <col class="c-mid" />
                <col class="c-mid" />
                <col class="c-size" />
                <col />
              </colgroup>
              <thead>
                <tr>
                  <th>Nome<i></i></th>
                  <th>Ultima modifica</th>
                  <th>Tipo</th>
                  <th>Dimensione</th>
                  <th></th>
                </tr>
              </thead>
              <tbody>
                <tr class="lead">
                  <td colspan="5" style=${styleMap({ height: `${this.lead}px` })}></td>
                </tr>
                ${files.slice(this.first).map(f => this.renderRow(f))}
              </tbody>
            </table>
          </div>
          <scroll-bar start="25" size="52"></scroll-bar>
          <div class="preview">
            ${this.selected
              ? html`<pre>${previewText}</pre>
                  <scroll-bar size="2"></scroll-bar>`
              : nothing}
          </div>
        </div>
        <div class="details">
          ${this.selected
            ? html`
                ${icon('iniBig', 'big')}
                <div class="what"><b>${this.selected}</b>Impostazioni di configurazione</div>
                <dl>
                  <dt>Ultima modifica:</dt>
                  <dd>18/08/2017 21:02</dd>
                  <dt>Dimensione:</dt>
                  <dd>48,8 KB</dd>
                </dl>
                <dl>
                  <dt>Data creazione:</dt>
                  <dd>18/08/2017 21:22</dd>
                </dl>
              `
            : nothing}
        </div>
      </div>
    `
  }
}

/* ---------- context menu ---------- */

type MenuItem = { label: string; sub?: boolean; key?: string; active?: boolean } | null

const menuItems: MenuItem[] = [
  { label: 'Visualizza', sub: true },
  { label: 'Ordina per', sub: true },
  { label: 'Raggruppa per', sub: true },
  { label: 'Aggiorna' },
  null,
  { label: 'Personalizza cartella...' },
  null,
  { label: 'Incolla', active: true },
  { label: 'Incolla collegamento' },
  { label: 'Annulla Copia', key: 'CTRL+Z' },
  null,
  { label: 'Condividi con', sub: true },
  null,
  { label: 'Nuovo', sub: true },
  null,
  { label: 'Proprietà' },
]

@customElement('context-menu')
export class ContextMenu extends LitElement {
  static styles = [
    base,
    css`
      :host {
        display: block;
        box-shadow: 3px 3px 4px rgb(0 0 0 / 60%);
      }
      .frame {
        padding: 2px;
      }
      button {
        display: flex;
        width: 100%;
        height: 17px;
        padding: 0 6px 0 18px;
      }
      .active {
        color: #fff;
        background: #0a246a;
      }
      .key {
        margin-left: auto;
        margin-right: 13px;
      }
      .sub {
        margin-left: auto;
        border: 4px solid transparent;
        border-left-color: currentColor;
        border-right: 0;
      }
      hr {
        height: 2px;
        margin: 0 1px;
        border: 0;
        border-top: 1px solid #808080;
        border-bottom: 1px solid #fff;
      }
      .sep {
        padding: 3px 0 4px;
      }
    `,
  ]

  render() {
    return html`
      <div class="frame">
        ${menuItems.map(item =>
          item
            ? html`<button class=${classMap({ active: !!item.active })}>
                ${item.label}${item.key ? html`<span class="key">${item.key}</span>` : nothing}${item.sub
                  ? html`<span class="sub"></span>`
                  : nothing}
              </button>`
            : html`<div class="sep"><hr /></div>`
        )}
      </div>
    `
  }
}

/* ---------- paint window ---------- */

@customElement('paint-window')
export class PaintWindow extends LitElement {
  static styles = [
    base,
    css`
      :host {
        display: block;
      }
      .frame {
        display: flex;
        flex-direction: column;
        height: 100%;
        padding: 3px;
      }
      .titlebar {
        gap: 8px;
        background: linear-gradient(90deg, #808080, #c0c0c0);
      }
      .bar {
        width: 2px;
        height: 13px;
        margin: 0 1px;
        background: #6a6a6a;
        border-right: 1px solid #a5a5a5;
      }
      .tabs {
        display: flex;
        align-items: center;
        flex: none;
        gap: 3px;
        height: 24px;
        margin-top: 1px;
        padding-right: 5px;
        background: #dfe9f6;
        border-bottom: 1px solid #b8c9df;
      }
      .file {
        gap: 6px;
        width: 56px;
        height: 22px;
        justify-content: center;
        color: #fff;
        background: linear-gradient(#3f74c4, #1c4fa3 50%, #14408f 50%, #2f74cf);
        border: 1px solid #173f82;
      }
      .tab-icon {
        width: 14px;
        height: 12px;
      }
      .tab {
        height: 23px;
        margin-bottom: -1px;
        padding: 0 11px;
        font-size: 12px;
        color: #442f7a;
        background: #fafcff;
        border: 1px solid #b8c9df;
        border-bottom: 0;
      }
      .tabs .icon:last-child {
        margin-left: auto;
      }
      .ribbon {
        display: flex;
        flex: none;
        height: 91px;
        color: #1e395b;
        background: linear-gradient(#f7faff, #e6eef9 45%, #dbe6f4 50%, #dce7f6);
        border-bottom: 1px solid #8ba0bc;
        overflow: hidden;
      }
      .clipboard {
        display: grid;
        grid-template-columns: 52px 100px;
        grid-template-rows: 76px 14px;
        font-size: 12px;
      }
      .paste {
        flex-direction: column;
        gap: 6px;
        padding-top: 7px;
      }
      .i28 {
        width: 28px;
        height: 31px;
      }
      .side {
        display: flex;
        flex-direction: column;
        gap: 6px;
        padding-top: 7px;
        color: #8d93a0;
      }
      .side button {
        gap: 3px;
      }
      .group {
        grid-column: 1 / 3;
        padding-left: 34px;
        color: #7a8494;
      }
      .colors {
        display: flex;
        margin-left: auto;
        margin-right: 129px;
      }
      .swatches {
        display: flex;
        flex-direction: column;
        gap: 4px;
        padding: 5px 4px 0 0;
      }
      .swatch {
        width: 20px;
        height: 18px;
        border: 1px solid #8d8d8d;
        box-shadow: inset 0 0 0 1px #fff;
      }
      .purple {
        background: #a349a4;
      }
      .lavender {
        background: #c8bfe7;
      }
      .edit {
        flex-direction: column;
        gap: 5px;
        padding: 6px 8px 0 0;
        border-right: 1px solid #a9bcd4;
        margin: 2px 0 7px;
        font-size: 12px;
      }
      .spectrum {
        width: 30px;
        height: 30px;
        border: 1px solid #a5a9ad;
        box-shadow: inset 0 0 0 2px #fff;
        background:
          linear-gradient(transparent 20%, rgb(128 128 128 / 80%)),
          linear-gradient(90deg, #f22, #fd0, #2e2, #0ee, #22f, #e2e, #f26);
      }
      .work {
        flex: 1;
        display: flex;
        min-height: 0;
        background: #c8d2e4;
      }
      .canvas {
        flex: 1;
        position: relative;
        min-width: 0;
        margin: 6px 0 0 5px;
        overflow: hidden;
        background: #3a6ea5;
      }
      .canvas explorer-window {
        position: absolute;
        left: 196px;
        top: 0;
        width: 964px;
        height: 644px;
      }
      .canvas context-menu {
        position: absolute;
        left: 971px;
        top: 155px;
        width: 203px;
      }
      .hscroll {
        display: flex;
        flex: none;
      }
      .hscroll scroll-bar {
        flex: 1;
      }
      .corner {
        width: 16px;
      }
      .status {
        display: flex;
        flex: none;
        gap: 2px;
        margin-top: 1px;
      }
      .cell {
        display: flex;
        align-items: center;
        gap: 5px;
        flex: none;
        width: 154px;
        height: 25px;
        padding: 0 3px;
        border: 1px solid;
        border-color: #808080 #fff #fff #808080;
      }
      .cell.fill {
        flex: 1;
      }
      .cell.zoom {
        width: 215px;
        padding: 0 0 0 17px;
      }
      .cell label {
        margin-right: 3px;
      }
      .i14 {
        width: 14px;
        height: 14px;
      }
      .i12 {
        width: 12px;
        height: 12px;
      }
      .grip {
        width: 12px;
        height: 12px;
        margin-left: auto;
        align-self: flex-end;
      }
      input {
        appearance: none;
        width: 84px;
        height: 21px;
        margin: 0 6px;
        background: linear-gradient(#808080 0 1px, #404040 1px 2px, #fff 2px) 0 9px / 100% 3px no-repeat;
        filter: drop-shadow(1px 1px 0 #808080);
      }
      input::-webkit-slider-thumb {
        appearance: none;
        width: 10px;
        height: 20px;
        background: linear-gradient(90deg, #fff 1px, #dedbd4 1px);
        clip-path: polygon(0 0, 100% 0, 100% 75%, 50% 100%, 0 75%);
      }
    `,
  ]

  render() {
    return html`
      <div class="frame">
        <div class="titlebar">
          ${icon('palette')}<span class="bar"></span>${icon('save')}${icon('undo')}${caption}
        </div>
        <div class="tabs">
          <button class="file" aria-label="Menu">${icon('fileTab', 'tab-icon')}<span class="down"></span></button>
          <button class="tab">Pagina iniziale</button>
          ${icon('helpBlue')}
        </div>
        <div class="ribbon">
          <div class="clipboard">
            <button class="paste">${icon('paste', 'i28')}Incolla<span class="down small"></span></button>
            <div class="side">
              <button>${icon('cut')}Taglia</button>
              <button>${icon('copy')}Copia</button>
            </div>
            <span class="group">Appunti</span>
          </div>
          <div class="colors">
            <div class="swatches">
              <span class="swatch purple"></span>
              <span class="swatch lavender"></span>
              <span class="swatch"></span>
            </div>
            <button class="edit"><span class="spectrum"></span><span>Modifica<br />colori</span></button>
          </div>
        </div>
        <div class="work">
          <div class="canvas">
            <desktop-icons></desktop-icons>
            <explorer-window lead="359" first="6"></explorer-window>
            <context-menu></context-menu>
          </div>
          <scroll-bar size="68"></scroll-bar>
        </div>
        <div class="hscroll">
          <scroll-bar horizontal size="88.7"></scroll-bar>
          <div class="corner"></div>
        </div>
        <div class="status">
          <div class="cell">${icon('move', 'i14')}</div>
          <div class="cell">${icon('selection', 'i14')}</div>
          <div class="cell">${icon('imageSize', 'i14')}1360 × 768pixel</div>
          <div class="cell">${icon('disk', 'i12')}Dimensioni: 201,9 KB</div>
          <div class="cell fill"></div>
          <div class="cell zoom">
            <label for="zoom">100%</label>
            <button aria-label="Zoom indietro">${icon('minus')}</button>
            <input id="zoom" type="range" min="0" max="100" value="50" />
            <button aria-label="Zoom avanti">${icon('plus')}</button>
            ${icon('grip', 'grip')}
          </div>
        </div>
      </div>
    `
  }
}

/* ---------- taskbar ---------- */

@customElement('task-bar')
export class TaskBar extends LitElement {
  static styles = [
    base,
    css`
      :host {
        display: flex;
        align-items: center;
        flex: none;
        height: 44px;
        padding: 4px 2px 2px;
        background: #d4d0c8;
        box-shadow: inset 0 1px #d4d0c8, inset 0 2px #fff;
      }
      button {
        height: 38px;
        justify-content: center;
      }
      .start {
        gap: 1px;
        width: 52px;
        margin-right: 9px;
        font-weight: bold;
      }
      .task {
        width: 48px;
        margin-right: 2px;
      }
      .pressed {
        background: #fff;
        border: 1px solid;
        border-color: #404040 #fff #fff #404040;
      }
      .i32 {
        width: 34px;
        height: 32px;
      }
      .i28 {
        width: 30px;
        height: 28px;
      }
      .lang {
        margin-left: auto;
        padding: 0 7px;
      }
      .sep {
        width: 2px;
        height: 22px;
        border-left: 1px solid #808080;
        border-right: 1px solid #fff;
      }
      .tray {
        display: flex;
        align-items: center;
        gap: 8px;
        height: 38px;
        margin-left: 2px;
        padding: 0 1px 0 6px;
        border: 1px solid;
        border-color: #808080 #fff #fff #808080;
      }
      .chevrons {
        width: 6px;
        height: 8px;
        margin-right: 2px;
      }
      .clock {
        padding-left: 4px;
        text-align: center;
        line-height: 16px;
      }
    `,
  ]

  render() {
    return html`
      <button class="start raised">${icon('winflag')}Start</button>
      <button class="task raised" aria-label="Internet Explorer">${icon('ie', 'i32')}</button>
      <button class="task pressed" aria-label="Esplora risorse">${icon('explorer', 'i32')}</button>
      <button class="task" aria-label="Windows Media Player">${icon('wmp', 'i28')}</button>
      <button class="task raised" aria-label="Paint">${icon('palette', 'i32')}</button>
      <span class="lang">IT</span>
      <span class="sep"></span>
      <div class="tray">
        <svg class="chevrons" viewBox="0 0 6 8"><path d="M0 3.500L3 1l3 2.500M0 7.500L3 5l3 2.500" fill="none" stroke="#000" stroke-width="1.300" /></svg>
        ${icon('volume')}${icon('netWarn')}${icon('flag')}
        <time class="clock">21:22<br />18/08/2017</time>
        ${icon('desktop')}
      </div>
    `
  }
}

/* ---------- root ---------- */

@customElement('app-root')
export class AppRoot extends LitElement {
  static styles = [
    base,
    css`
      :host {
        display: flex;
        flex-direction: column;
        height: 100vh;
        overflow: hidden;
      }
      .desktop {
        flex: 1;
        position: relative;
        min-height: 0;
        overflow: hidden;
        background: #3a6ea5;
      }
      paint-window {
        position: absolute;
        inset: 4px 0 0 119px;
      }
      .front {
        position: absolute;
        left: 196px;
        top: 0;
        width: 964px;
        height: 644px;
      }
      .marker {
        position: absolute;
        left: 356px;
        top: 310px;
        width: 206px;
        height: 70px;
      }
    `,
  ]

  render() {
    return html`
      <main class="desktop">
        <desktop-icons></desktop-icons>
        <paint-window></paint-window>
        <explorer-window class="front" selected="php.ini"></explorer-window>
        <svg class="marker" viewBox="0 0 206 70" aria-hidden="true">
          <path
            d="M5 20L99 5h8l94 15v31l-94 14h-8L5 51z"
            fill="none"
            stroke="#ed1c24"
            stroke-width="8"
            stroke-linejoin="round"
          />
        </svg>
      </main>
      <task-bar></task-bar>
    `
  }
}

declare global {
  interface HTMLElementTagNameMap {
    'app-root': AppRoot
    'task-bar': TaskBar
    'paint-window': PaintWindow
    'explorer-window': ExplorerWindow
    'context-menu': ContextMenu
    'desktop-icons': DesktopIcons
    'scroll-bar': ScrollBar
  }
}
